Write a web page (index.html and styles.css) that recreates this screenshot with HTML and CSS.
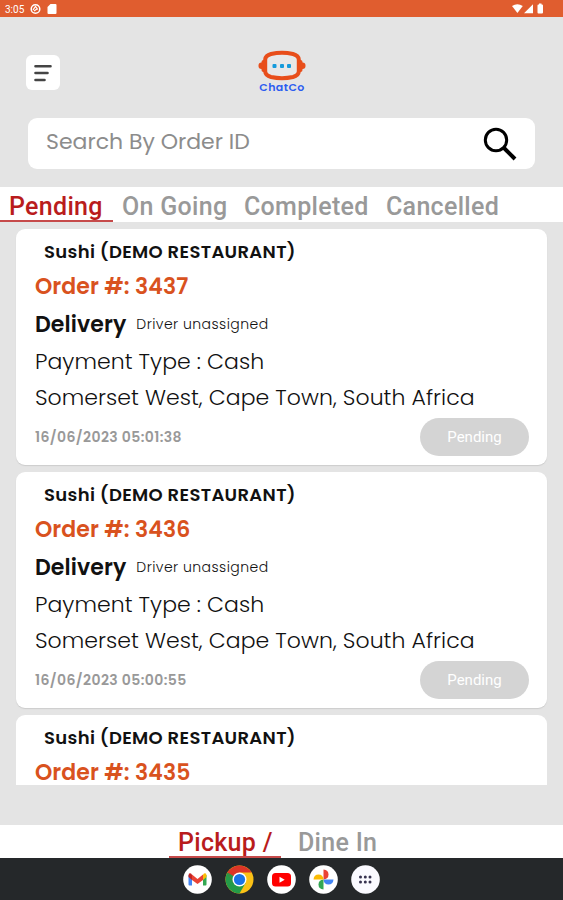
FILE: index.html
```
<!DOCTYPE html>
<html lang="en">
<head>
    <meta charset="utf-8">
    <title>ChatCo Orders</title>
    <link rel="stylesheet" href="styles.css">
</head>
<body>
    <div class="status-bar">
        <span class="clock">3:05</span>
        <svg class="status-left" width="28" height="12" viewBox="0 0 28 12">
            <circle cx="6.500" cy="6" r="4.300" fill="none" stroke="#fff" stroke-width="1.500"/>
            <path d="M4 6.800 6.500 3.500 8.800 6.500M5 8 8.300 5.700" fill="none" stroke="#fff" stroke-width="1.200"/>
            <path d="M21.500 1h5q1 0 1 1v8q0 1-1 1h-7q-1 0-1-1V4z" fill="#fff"/>
        </svg>
        <svg class="status-right" width="34" height="12" viewBox="0 0 34 12">
            <path d="M0 3Q5.300-.5 10.800 3L5.400 10z" fill="#fff"/>
            <path d="M12 10.300h9V1.300z" fill="#fff"/>
            <path d="M27 1.500V.6h2.500v.9h.5q1 0 1 1v7q0 1-1 1h-3.500q-1 0-1-1v-7q0-1 1-1z" fill="#fff"/>
        </svg>
    </div>

    <header class="header">
        <button class="menu_btn">
            <svg width="20" height="20" viewBox="0 0 20 20" stroke="#444" stroke-width="2.600" stroke-linecap="round">
                <path d="M2.500 3.200h15M2.500 10h12M2.500 17h9"/>
            </svg>
        </button>
        <div class="logo">
            <svg width="48" height="31" viewBox="0 0 48 31">
                <rect x=".5" y="12.500" width="8" height="6.500" rx="3" fill="#e84e1b"/>
                <rect x="3.500" y="10" width="5" height="12" rx="2" fill="#e84e1b"/>
                <rect x="39.500" y="12.500" width="8" height="6.500" rx="3" fill="#e84e1b"/>
                <rect x="39.500" y="10" width="5" height="12" rx="2" fill="#e84e1b"/>
                <path d="M13 4Q24 1.500 35 4 40.500 5.500 40.800 9.500v12q-.3 4-5.800 5.500Q24 29.300 13 27 7.500 25.500 7.200 21.500v-12Q7.500 5.500 13 4z" fill="#e8e8e8" stroke="#e84e1b" stroke-width="4"/>
                <g fill="#159bdc">
                    <rect x="14.500" y="14" width="4" height="4" rx="1"/>
                    <rect x="22" y="14" width="4" height="4" rx="1"/>
                    <rect x="29" y="14" width="4" height="4" rx="1"/>
                </g>
            </svg>
            <span>ChatCo</span>
        </div>
    </header>

    <div class="search">
        <span>Search By Order ID</span>
        <svg width="34" height="34" viewBox="0 0 34 34" fill="none" stroke="#000">
            <circle cx="13" cy="13" r="10.700" stroke-width="3"/>
            <path d="M20.500 20.500 32 32" stroke-width="4"/>
        </svg>
    </div>

    <nav class="tabs">
        <a class="tab active">Pending</a>
        <a class="tab going">On Going</a>
        <a class="tab completed">Completed</a>
        <a class="tab">Cancelled</a>
    </nav>

    <main class="orders">
        <div class="card">
            <div class="restaurant">Sushi (DEMO RESTAURANT)</div>
            <div class="order_no">Order #: 3437</div>
            <div class="delivery"><b>Delivery</b><span>Driver unassigned</span></div>
            <div class="payment">Payment Type : Cash</div>
            <div class="address">Somerset West, Cape Town, South Africa</div>
            <div class="card_footer">
                <span class="date">16/06/2023 05:01:38</span>
                <button class="pill">Pending</button>
            </div>
        </div>
        <div class="card">
            <div class="restaurant">Sushi (DEMO RESTAURANT)</div>
            <div class="order_no">Order #: 3436</div>
            <div class="delivery"><b>Delivery</b><span>Driver unassigned</span></div>
            <div class="payment">Payment Type : Cash</div>
            <div class="address">Somerset West, Cape Town, South Africa</div>
            <div class="card_footer">
                <span class="date">16/06/2023 05:00:55</span>
                <button class="pill">Pending</button>
            </div>
        </div>
        <div class="card partial">
            <div class="restaurant">Sushi (DEMO RESTAURANT)</div>
            <div class="order_no">Order #: 3435</div>
        </div>
    </main>

    <nav class="bottom_tabs">
        <a class="tab active">Pickup /</a>
        <a class="tab">Dine In</a>
    </nav>

    <footer class="taskbar">
        <svg width="29" height="29" viewBox="0 0 29 29">
            <circle cx="14.500" cy="14.500" r="14.300" fill="#fff"/>
            <path d="M5.500 10v9.500q0 1 1 1H9V11z" fill="#4285f4"/>
            <path d="M20 11v9.500h2.500q1 0 1-1V10z" fill="#34a853"/>
            <path d="M20 9.500 21 8.500q2.500-1 2.500 2V12L20 15z" fill="#fbbc04"/>
            <path d="M5.500 12v-1.500q0-3 2.500-2l1 1V15z" fill="#c5221f"/>
            <path d="M9 9.500 14.500 14 20 9.500V15l-5.500 4L9 15z" fill="#ea4335"/>
        </svg>
        <svg width="29" height="29" viewBox="0 0 29 29">
            <circle cx="14.500" cy="14.500" r="14" fill="#fbc116"/>
            <path d="M14.500 14.500 2.380 7.500A14 14 0 0 0 14.500 28.500L20.560 18z" fill="#249b48"/>
            <path d="M2.380 7.500A14 14 0 0 1 26.620 7.500H14.500L8.440 18z" fill="#dc3527"/>
            <path d="M2.380 7.500 8.440 18 14.500 14.500z" fill="#249b48"/>
            <circle cx="14.500" cy="14.500" r="7" fill="#fff"/>
            <circle cx="14.500" cy="14.500" r="5.600" fill="#1a73e8"/>
        </svg>
        <svg width="29" height="29" viewBox="0 0 29 29">
            <circle cx="14.500" cy="14.500" r="14.300" fill="#fff"/>
            <rect x="5" y="8" width="19" height="13.500" rx="3.500" fill="#f00"/>
            <path d="M12.500 11.700v6l5.200-3z" fill="#fff"/>
        </svg>
        <svg width="29" height="29" viewBox="0 0 29 29">
            <circle cx="14.500" cy="14.500" r="14.300" fill="#fff"/>
            <path d="M14.500 14.500V4.500q5 .5 5 5t-5 5z" fill="#ea4335"/>
            <path d="M14.500 14.500h10q-.5 5-5 5t-5-5z" fill="#4285f4"/>
            <path d="M14.500 14.500v10q-5-.5-5-5t5-5z" fill="#34a853"/>
            <path d="M14.500 14.500h-10q.5-5 5-5t5 5z" fill="#fbbc04"/>
        </svg>
        <svg width="29" height="29" viewBox="0 0 29 29">
            <circle cx="14.500" cy="14.500" r="14.300" fill="#fafaff"/>
            <g fill="#35324f">
                <circle cx="9.500" cy="12" r="1.500"/><circle cx="14.300" cy="12" r="1.500"/><circle cx="19" cy="12" r="1.500"/>
                <circle cx="9.500" cy="17" r="1.500"/><circle cx="14.300" cy="17" r="1.500"/><circle cx="19" cy="17" r="1.500"/>
            </g>
        </svg>
    </footer>
</body>
</html>
```
FILE: styles.css
```
* {
    box-sizing: border-box;
}

body {
    margin: 0;
    height: 900px;
    display: flex;
    flex-direction: column;
    overflow: hidden;
    background: #e4e4e4;
    font-family: Poppins, Inter, sans-serif;
    white-space: nowrap;
}

button {
    border: 0;
    padding: 0;
    font-family: inherit;
}

svg {
    display: block;
    flex: none;
}

.status-bar {
    height: 17px;
    flex: none;
    display: flex;
    align-items: center;
    padding: 1px 17px 0 5px;
    background: #e05d2f;
    color: #fff;
}

.clock {
    width: 24px;
    font: 400 10px Roboto, sans-serif;
}

.status-right {
    margin-left: auto;
}

.header {
    height: 101px;
    flex: none;
    display: grid;
    grid-template-columns: 1fr 48px 1fr;
    padding: 33px 25px 0 26px;
}

.menu_btn {
    width: 34px;
    height: 35px;
    margin-top: 5px;
    display: flex;
    align-items: center;
    justify-content: center;
    background: #fff;
    border-radius: 6px;
}

.logo {
    text-align: center;
    color: #2b5cf0;
    font-size: 11px;
    font-weight: 600;
    line-height: 12px;
    letter-spacing: .4px;
}

.search {
    height: 51px;
    flex: none;
    margin: 0 28px;
    padding: 0 18px;
    display: flex;
    align-items: center;
    justify-content: space-between;
    background: #fff;
    border-radius: 9px;
    color: #8c8c8c;
    font-size: 22px;
}

.search span {
    padding-bottom: 4px;
}

.tabs {
    height: 35px;
    flex: none;
    margin-top: 18px;
    display: flex;
    background: #fff;
}

.tab {
    color: #999;
    font: 500 25px/40px Roboto, sans-serif;
    letter-spacing: .3px;
}

.tabs .active {
    width: 113px;
    padding-left: 9px;
}

.going {
    width: 131px;
    padding-left: 9px;
}

.completed {
    width: 142px;
}

.active {
    color: #b91c1c;
    border-bottom: 2px solid #c64a4a;
}

.orders {
    height: 556px;
    flex: none;
    margin: 7px 16px 0;
    display: flex;
    flex-direction: column;
    gap: 7px;
}

.card {
    height: 236px;
    flex: none;
    padding: 6px 18px 0 19px;
    background: #fff;
    border-radius: 9px;
    box-shadow: 0 1px 1px #ccc;
    color: #111;
}

.partial {
    height: 70px;
    border-radius: 9px 9px 0 0;
    box-shadow: none;
}

.restaurant {
    margin-bottom: 5px;
    padding-left: 9px;
    font-size: 18px;
    font-weight: 600;
    line-height: 34px;
    letter-spacing: .33px;
}

.order_no {
    color: #d9521e;
    font-size: 22px;
    font-weight: 600;
    line-height: 25px;
    letter-spacing: .08px;
}

.delivery {
    height: 47px;
    padding-top: 4px;
    display: flex;
    align-items: center;
    gap: 10px;
}

.delivery b {
    font-size: 22px;
    font-weight: 600;
    letter-spacing: .1px;
}

.delivery span {
    font-size: 14px;
    font-weight: 300;
    letter-spacing: .45px;
}

.payment {
    font-size: 22px;
    font-weight: 300;
    line-height: 32px;
    letter-spacing: .05px;
}

.address {
    font-size: 22px;
    font-weight: 300;
    line-height: 40px;
    letter-spacing: .04px;
}

.card_footer {
    display: flex;
    align-items: center;
    justify-content: space-between;
}

.date {
    color: #999;
    font-size: 14px;
    font-weight: 600;
    letter-spacing: .4px;
}

.pill {
    width: 109px;
    height: 38px;
    border-radius: 20px;
    background: #d4d4d4;
    color: #fff;
    font: 400 15px Roboto, sans-serif;
}

.bottom_tabs {
    height: 33px;
    flex: none;
    margin-top: 40px;
    padding-left: 169px;
    display: flex;
    gap: 17px;
    background: #fff;
}

.bottom_tabs .tab {
    line-height: 36px;
}

.bottom_tabs .active {
    width: 112px;
    padding-left: 9px;
}

.taskbar {
    height: 42px;
    flex: none;
    display: flex;
    justify-content: center;
    gap: 13px;
    padding-top: 7px;
    background: #25282a;
}
```
